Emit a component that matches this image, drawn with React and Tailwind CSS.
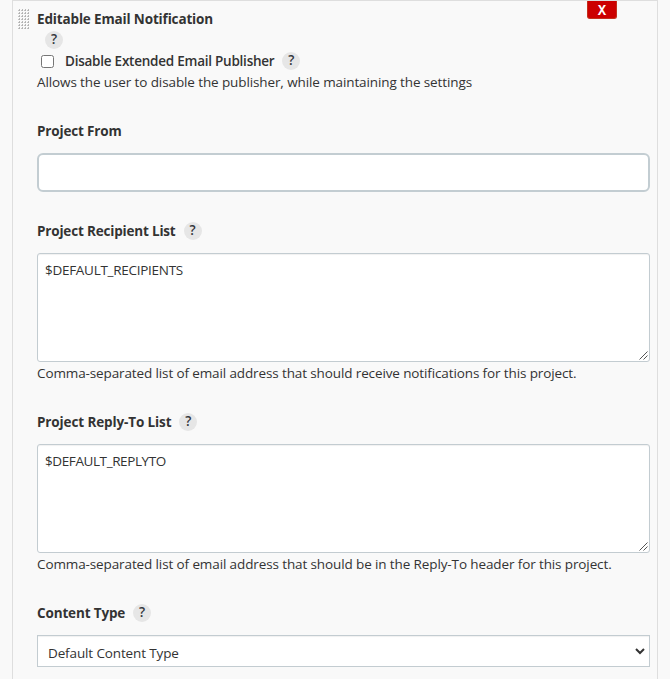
import React from "react";

function Help({ className = "" }) {
  return (
    <span
      className={`inline-flex h-[18px] w-[18px] shrink-0 items-center justify-center rounded-full bg-[#e6e6e6] pb-px text-[13.5px] font-semibold leading-none text-[#33373c] ${className}`}
    >
      ?
    </span>
  );
}

function Label({ children, help, className = "", spacing }) {
  return (
    <div className={`flex h-[21px] items-center ${className}`}>
      <span className={`whitespace-nowrap font-bold ${spacing}`}>{children}</span>
      {help && <Help className="-mt-px ml-2" />}
    </div>
  );
}

function TextBox({ children, spacing }) {
  return (
    <div className="relative mt-[11px] h-[109px] rounded-[3px] border border-[#c3ccd1] bg-white px-[7px] pt-[6px] shadow-[inset_0_1px_1px_rgba(0,0,0,0.06)]">
      <span className={`block h-[21px] leading-[21px] ${spacing}`}>{children}</span>
      <svg
        className="absolute right-[1px] bottom-[1px]"
        width="9"
        height="9"
        viewBox="0 0 9 9"
        stroke="#555"
        strokeWidth="1"
        fill="none"
      >
        <path d="M0.5 8.5 8.5 0.5M4.5 8.5 8.5 4.5" />
      </svg>
    </div>
  );
}

function Caption({ children, spacing }) {
  return (
    <div className={`mt-px h-[21px] whitespace-nowrap leading-[21px] ${spacing}`}>{children}</div>
  );
}

function Grip() {
  const rows = [0, 1, 2, 3, 4, 5, 6];
  const cols = [0, 1, 2, 3];
  return (
    <svg className="absolute left-[5px] top-[8px]" width="12" height="21" viewBox="0 0 12 21">
      {rows.map((r) =>
        cols.map((c) => (
          <g key={`${r}-${c}`}>
            <rect x={c * 3 + 1} y={r * 3} width="1" height="1" fill="#b8b8b8" />
            <rect x={c * 3} y={r * 3 + 1} width="1" height="1" fill="#c4c4c4" />
            <rect x={c * 3 + 1} y={r * 3 + 1} width="1" height="1" fill="#b0b0b0" />
          </g>
        ))
      )}
    </svg>
  );
}

export default function App() {
  return (
    <div className="h-[679px] w-[670px] overflow-hidden bg-[#f9f9f9] font-['Open_Sans','Noto_Sans',sans-serif] text-[13.5px] text-[#333]">
      <div className="relative ml-3 h-[700px] w-[646px] border border-[#dedede] pt-[9px] pr-[7px] pl-[24px]">
        <Grip />
        <button className="absolute top-0 right-[40px] flex h-[18px] w-[30px] items-center justify-center rounded-b-[3px] border border-t-0 border-[#c4301c] bg-[#cc0000] pt-[2px] font-['Liberation_Mono',monospace] text-[14px] font-bold leading-none text-white">
          X
        </button>
        <div className="flex h-[19px] items-center whitespace-nowrap font-bold tracking-[-0.15px]">
          Editable Email Notification
        </div>
        <div className="mt-[2px] flex h-[18px] pl-2">
          <Help />
        </div>
        <div className="mt-[2px] flex h-[21px] items-center">
          <span className="ml-1 h-[13px] w-[13px] shrink-0 rounded-[2.5px] border border-[#767676] bg-white" />
          <span className="ml-[11px] whitespace-nowrap font-semibold tracking-[-0.24px]">
            Disable Extended Email Publisher
          </span>
          <Help className="-mt-px ml-2" />
        </div>
        <div className="h-[21px] whitespace-nowrap leading-[21px] tracking-[-0.11px]">
          Allows the user to disable the publisher, while maintaining the settings
        </div>

        <Label className="mt-7" spacing="tracking-[-0.17px]">Project From</Label>
        <input className="mt-[11px] block h-[39px] w-full rounded-[6px] border-2 border-[#c3cdd2] bg-white px-2 outline-none" />

        <Label className="mt-[29px]" spacing="tracking-[-0.18px]" help>
          Project Recipient List
        </Label>
        <TextBox spacing="tracking-[-0.28px]">$DEFAULT_RECIPIENTS</TextBox>
        <Caption spacing="tracking-[-0.12px]">
          Comma-separated list of email address that should receive notifications for this project.
        </Caption>

        <Label className="mt-7" spacing="tracking-[-0.12px]" help>
          Project Reply-To List
        </Label>
        <TextBox spacing="tracking-[-0.4px]">$DEFAULT_REPLYTO</TextBox>
        <Caption spacing="tracking-[-0.115px]">
          Comma-separated list of email address that should be in the Reply-To header for this project.
        </Caption>

        <Label className="mt-7" spacing="tracking-[-0.15px]" help>
          Content Type
        </Label>
        <div className="mt-[11px] flex h-8 items-center justify-between border border-[#c3ccd1] bg-white pr-[4px] pl-[10px] shadow-[inset_0_1px_1px_rgba(0,0,0,0.06)]">
          <span className="pt-[4px] tracking-[-0.13px]">Default Content Type</span>
          <svg width="10" height="7" viewBox="0 0 10 7" fill="none" stroke="#333" strokeWidth="2">
            <path d="M1 1 5 5 9 1" />
          </svg>
        </div>
      </div>
    </div>
  );
}
